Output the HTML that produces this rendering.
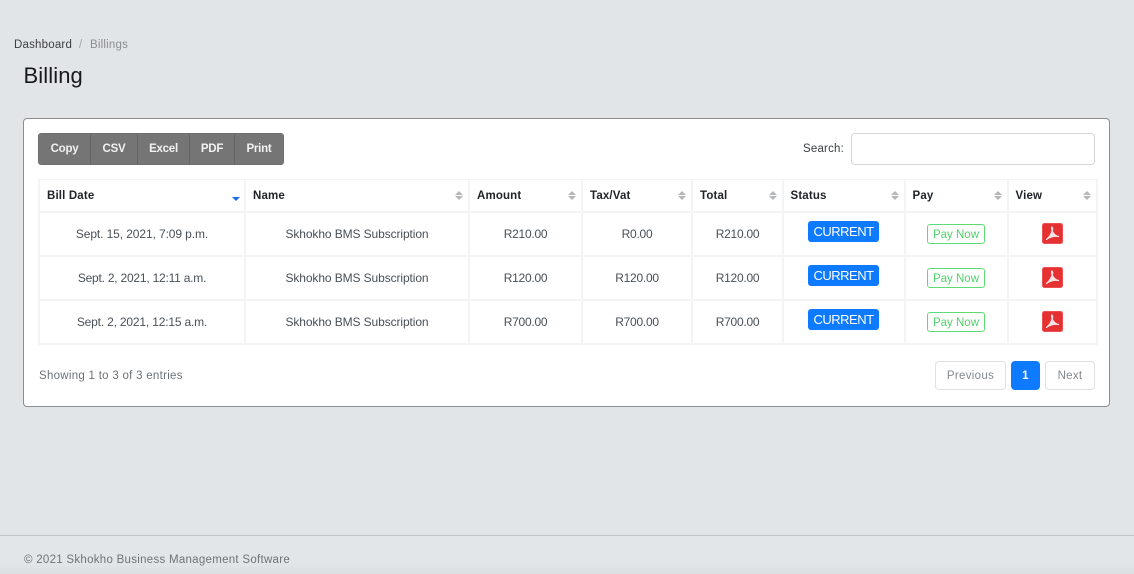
<!DOCTYPE html>
<html><head><meta charset="utf-8"><style>
html,body{margin:0;padding:0}
body{width:1134px;height:574px;overflow:hidden;position:relative;background:#e2e5e7;font-family:"Liberation Sans",sans-serif;font-size:12px;color:#495057;letter-spacing:-.1px}
.a{position:absolute;white-space:nowrap}
.c{position:absolute;text-align:center;white-space:nowrap}
.b{position:absolute;box-sizing:border-box}
.th{font-weight:bold;color:#212529;letter-spacing:.15px;font-size:11.5px;top:189px;line-height:14px}
.td{line-height:14px}
.n{letter-spacing:-.25px}
.sort{position:absolute;top:191px;width:0;height:0}
.sort:before,.sort:after{content:"";position:absolute;left:-4px;border-left:4px solid transparent;border-right:4px solid transparent}
.sort:before{top:0;border-bottom:4px solid #b4b6b8}
.sort:after{top:5px;border-top:4px solid #b4b6b8}
.h{background:#f3f4f5;position:absolute}
.cur{position:absolute;left:808px;width:71px;height:21px;background:#0d7aff;border-radius:3px;color:#fff;font-size:13px;line-height:21px;text-align:center;letter-spacing:-.5px}
.pay{position:absolute;left:927px;width:58px;height:20px;box-sizing:border-box;border:1px solid #5ddb74;border-radius:3px;color:#4fd269;font-size:11.5px;line-height:20px;text-align:center;letter-spacing:0;background:#fff}
.pdf{position:absolute;left:1042px;width:21px;height:21px}
.btn{position:absolute;top:134px;height:30px;line-height:30px;text-align:center;color:#f1f1f1;font-weight:bold;font-size:11.5px;letter-spacing:-.25px;background:#757575;box-sizing:border-box}
.pg{position:absolute;top:361px;height:29px;box-sizing:border-box;border:1px solid #dee0e2;border-radius:4px;line-height:29px;text-align:center;color:#85898d;background:#fff;font-size:11.5px;letter-spacing:.3px}
</style></head><body>
<div class="a" style="left:14px;top:38px;line-height:14px;color:#3d4043;font-size:11.5px;letter-spacing:.2px">Dashboard</div>
<div class="a" style="left:79px;top:38px;line-height:14px;color:#a0a4a8;font-size:11.5px">/</div>
<div class="a" style="left:90px;top:38px;line-height:14px;color:#8a8e92;font-size:11.5px;letter-spacing:.2px">Billings</div>
<div class="a" style="left:23.5px;top:62px;line-height:28px;font-size:22px;color:#17191b;letter-spacing:.1px">Billing</div>

<div class="b" style="left:23px;top:118px;width:1087px;height:289px;background:#fff;border:1px solid #8b8d8f;border-radius:4px"></div>

<div class="b" style="left:38px;top:133px;width:246px;height:32px;background:#757575;border:1px solid #6f6f6f;border-radius:3px"></div>
<div class="btn" style="left:39px;width:51px">Copy</div>
<div class="btn" style="left:91px;width:46px">CSV</div>
<div class="btn" style="left:138px;width:51px">Excel</div>
<div class="btn" style="left:190px;width:44px">PDF</div>
<div class="btn" style="left:235px;width:48px">Print</div>
<div class="b" style="left:90px;top:134px;width:1px;height:30px;background:#646464"></div>
<div class="b" style="left:137px;top:134px;width:1px;height:30px;background:#646464"></div>
<div class="b" style="left:189px;top:134px;width:1px;height:30px;background:#646464"></div>
<div class="b" style="left:234px;top:134px;width:1px;height:30px;background:#646464"></div>

<div class="a" style="left:803px;top:142px;line-height:14px;color:#3d4043;font-size:11.5px;letter-spacing:.2px">Search:</div>
<div class="b" style="left:851px;top:133px;width:244px;height:32px;background:#fff;border:1px solid #d4d7da;border-radius:4px"></div>

<div class="h" style="left:38px;top:179px;width:1060px;height:1px"></div>
<div class="h" style="left:38px;top:211px;width:1060px;height:2px"></div>
<div class="h" style="left:38px;top:255px;width:1060px;height:2px"></div>
<div class="h" style="left:38px;top:299px;width:1060px;height:2px"></div>
<div class="h" style="left:38px;top:343px;width:1060px;height:2px"></div>
<div class="h" style="left:38px;top:179px;width:2px;height:166px"></div>
<div class="h" style="left:244px;top:179px;width:2px;height:166px"></div>
<div class="h" style="left:468px;top:179px;width:2px;height:166px"></div>
<div class="h" style="left:581px;top:179px;width:2px;height:166px"></div>
<div class="h" style="left:691px;top:179px;width:2px;height:166px"></div>
<div class="h" style="left:782px;top:179px;width:2px;height:166px"></div>
<div class="h" style="left:904px;top:179px;width:2px;height:166px"></div>
<div class="h" style="left:1007px;top:179px;width:2px;height:166px"></div>
<div class="h" style="left:1096px;top:179px;width:2px;height:166px"></div>

<div class="a th" style="left:47px">Bill Date</div>
<div class="a th" style="left:253px">Name</div>
<div class="a th" style="left:477px">Amount</div>
<div class="a th" style="left:590px">Tax/Vat</div>
<div class="a th" style="left:700px">Total</div>
<div class="a th" style="left:790.500px">Status</div>
<div class="a th" style="left:912.500px">Pay</div>
<div class="a th" style="left:1015.500px">View</div>

<div class="b" style="left:232px;top:197px;width:0;height:0;border-left:4px solid transparent;border-right:4px solid transparent;border-top:4px solid #1a6fe8"></div>
<div class="sort" style="left:459px"></div>
<div class="sort" style="left:572px"></div>
<div class="sort" style="left:682px"></div>
<div class="sort" style="left:773px"></div>
<div class="sort" style="left:895px"></div>
<div class="sort" style="left:998px"></div>
<div class="sort" style="left:1087px"></div>

<div class="c td" style="left:40px;width:204px;top:227px">Sept. 15, 2021, 7:09 p.m.</div>
<div class="c td" style="left:246px;width:222px;top:227px">Skhokho BMS Subscription</div>
<div class="c td n" style="left:470px;width:111px;top:227px">R210.00</div>
<div class="c td n" style="left:583px;width:108px;top:227px">R0.00</div>
<div class="c td n" style="left:693px;width:89px;top:227px">R210.00</div>
<div class="cur" style="top:221px">CURRENT</div>
<div class="pay" style="top:224px">Pay Now</div>
<svg class="pdf" style="top:223px" viewBox="0 0 21 21"><rect x=".5" y=".5" width="20" height="20" rx="2" fill="#e53131" stroke="#ee5050"/><path d="M4.500 16.500C7 14.500 9.500 10.500 10.500 7C10.800 5.500 10.500 4 10 4C9.500 4 9.500 5.500 10.200 8C11.500 11.500 13.500 13 16.500 13.500C13 12.800 8 13.500 4.500 16.500Z" fill="#fbe3e3" stroke="#fbe3e3" stroke-width="1.300" stroke-linejoin="round"/></svg>

<div class="c td" style="left:40px;width:204px;top:271px;letter-spacing:-.22px">Sept. 2, 2021, 12:11 a.m.</div>
<div class="c td" style="left:246px;width:222px;top:271px">Skhokho BMS Subscription</div>
<div class="c td n" style="left:470px;width:111px;top:271px">R120.00</div>
<div class="c td n" style="left:583px;width:108px;top:271px">R120.00</div>
<div class="c td n" style="left:693px;width:89px;top:271px">R120.00</div>
<div class="cur" style="top:265px">CURRENT</div>
<div class="pay" style="top:268px">Pay Now</div>
<svg class="pdf" style="top:267px" viewBox="0 0 21 21"><rect x=".5" y=".5" width="20" height="20" rx="2" fill="#e53131" stroke="#ee5050"/><path d="M4.500 16.500C7 14.500 9.500 10.500 10.500 7C10.800 5.500 10.500 4 10 4C9.500 4 9.500 5.500 10.200 8C11.500 11.500 13.500 13 16.500 13.500C13 12.800 8 13.500 4.500 16.500Z" fill="#fbe3e3" stroke="#fbe3e3" stroke-width="1.300" stroke-linejoin="round"/></svg>

<div class="c td" style="left:40px;width:204px;top:315px;letter-spacing:-.18px">Sept. 2, 2021, 12:15 a.m.</div>
<div class="c td" style="left:246px;width:222px;top:315px">Skhokho BMS Subscription</div>
<div class="c td n" style="left:470px;width:111px;top:315px">R700.00</div>
<div class="c td n" style="left:583px;width:108px;top:315px">R700.00</div>
<div class="c td n" style="left:693px;width:89px;top:315px">R700.00</div>
<div class="cur" style="top:309px">CURRENT</div>
<div class="pay" style="top:312px">Pay Now</div>
<svg class="pdf" style="top:311px" viewBox="0 0 21 21"><rect x=".5" y=".5" width="20" height="20" rx="2" fill="#e53131" stroke="#ee5050"/><path d="M4.500 16.500C7 14.500 9.500 10.500 10.500 7C10.800 5.500 10.500 4 10 4C9.500 4 9.500 5.500 10.200 8C11.500 11.500 13.500 13 16.500 13.500C13 12.800 8 13.500 4.500 16.500Z" fill="#fbe3e3" stroke="#fbe3e3" stroke-width="1.300" stroke-linejoin="round"/></svg>

<div class="a" style="left:39px;top:369px;line-height:14px;color:#6c7176;font-size:11.5px;letter-spacing:.28px">Showing 1 to 3 of 3 entries</div>
<div class="pg" style="left:935px;width:71px">Previous</div>
<div class="pg" style="left:1011px;width:29px;background:#0d7aff;border-color:#0d7aff;color:#fff;font-weight:bold">1</div>
<div class="pg" style="left:1045px;width:50px">Next</div>

<div class="b" style="left:0;top:535px;width:1134px;height:1px;background:#c3c6c8"></div>
<div class="b" style="left:0;top:536px;width:1134px;height:38px;background:linear-gradient(#e3e6e8 70%,#dcdfe1)"></div>
<div class="a" style="left:24px;top:553px;line-height:14px;color:#6f7377;font-size:11.5px;letter-spacing:.28px">© 2021 Skhokho Business Management Software</div>
</body></html>
